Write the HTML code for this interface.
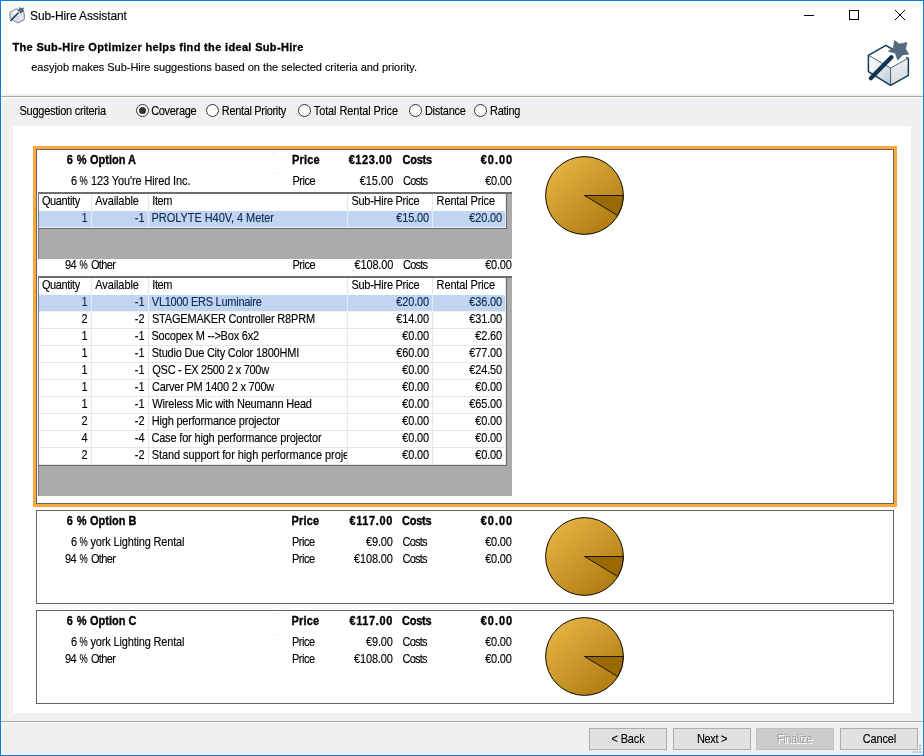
<!DOCTYPE html>
<html>
<head>
<meta charset="utf-8">
<title>Sub-Hire Assistant</title>
<style>
*{box-sizing:border-box;margin:0;padding:0}
html,body{width:924px;height:756px;overflow:hidden;background:#f0f0f0}
body{font-family:"Liberation Sans",sans-serif;font-size:11px;color:#000;position:relative;-webkit-text-stroke:0.12px currentColor}
#wrap{position:absolute;left:0;top:0;width:924px;height:756px;will-change:transform}
.abs{position:absolute}
.t{position:absolute;white-space:nowrap;line-height:13px;height:13px}
.b{font-weight:bold;-webkit-text-stroke:0.3px #000}
#win{position:absolute;left:0;top:0;width:924px;height:756px;background:#f0f0f0}
#bd{position:absolute;left:0;top:0;width:924px;height:756px;border:1px solid #0a7bd8;z-index:50;pointer-events:none}
#hdr{position:absolute;left:1px;top:1px;width:922px;height:93px;background:#fff}
#sep1{position:absolute;left:1px;top:96px;width:922px;height:1px;background:#aca899}
#sep1b{position:absolute;left:1px;top:97px;width:922px;height:1px;background:#fff}
#edgeL,#edgeR{position:absolute;top:94px;width:1px;height:661px;background:#fbf8f5}
#edgeL{left:1px}#edgeR{left:922px}
#panel{position:absolute;left:13px;top:126px;width:898px;height:587px;background:#fff}
#sep2{position:absolute;left:1px;top:721px;width:922px;height:1px;background:#aca899}
#sep2b{position:absolute;left:1px;top:722px;width:922px;height:1px;background:#fff}
.radio{position:absolute;width:13px;height:13px;border:1px solid #333;border-radius:50%;background:#fff;top:104px}
.radio.on::after{content:"";position:absolute;left:2px;top:2px;width:7px;height:7px;border-radius:50%;background:#333}
.btn{position:absolute;top:728px;width:78px;height:22px;border:1px solid #adadad;background:#e1e1e1}
.btn.dis{background:#cccccc;border-color:#bfbfbf}
.bt_{position:absolute;white-space:nowrap;line-height:13px;height:13px;top:733px}
.bt_.dis{color:#a0a0a0;text-shadow:1px 1px 0 #fff;-webkit-text-stroke:0}
.optA{position:absolute;left:33px;top:146px;width:864px;height:361px;border:3px solid #ffa73a;background:#fff}
.optA .in{position:absolute;left:0;top:0;width:858px;height:355px;border:1px solid #646464}
.opt{position:absolute;left:36px;width:858px;height:94px;border:1px solid #646464;background:#fff}
.grid{position:absolute;left:38px;width:474px;background:#ababab}
.grid .bl{position:absolute;left:0;top:0;width:1px;height:100%;background:#7a7a7a}
.grid .bt{position:absolute;left:0;top:0;width:474px;height:2px;background:#6e6e6e}
.cells{position:absolute;left:1px;top:2px;width:468px;background:#fff;border-right:1px solid #696969;border-bottom:1px solid #696969}
.row{position:relative;height:17px;width:467px;border-bottom:1px solid #e6e6e6;background:#fff}
.row.h{border-bottom-color:#fff}
.row.sel{background:#c1d5f1;color:#0b2a55;border-bottom-color:#eef3fb}
.c{position:absolute;top:0;height:16px;line-height:15px;white-space:nowrap;overflow:hidden;border-right:1px solid #e6e6e6}
.row.sel .c{border-right-color:#e4ecf8}
.c1{left:0;width:53px}
.c2{left:53px;width:57px}
.c3{left:110px;width:199px}
.c4{left:309px;width:85px}
.c5{left:394px;width:73px}
.row .c1,.row .c2,.row .c4,.row .c5{text-align:right;padding-right:3px}
.row .c5{padding-right:3px}
.row .c1,.row .c2{padding-right:3.5px}
.row .c4 span,.row .c5 span{letter-spacing:-0.15px}
.row.h .c{text-align:left;padding-left:3px;padding-right:0}
.row .c3{padding-left:3px}
.c span{display:inline-block;transform:scaleY(1.12);transform-origin:0 11px}
.ws{word-spacing:-1.2px}
.pc{display:inline-block;transform:scaleX(0.84);transform-origin:100% 50%}
.ms{transform:scaleY(1.12);transform-origin:0 10px}
</style>
</head>
<body>
<div id="wrap">
<div id="win"><div id="edgeL"></div><div id="edgeR"></div><div id="hdr"></div><div id="sep1"></div><div id="sep1b"></div><div id="panel"></div><div id="sep2"></div><div id="sep2b"></div></div>
<div id="bd"></div>
<svg class="abs" style="left:8px;top:5px" width="20" height="20" viewBox="8 5 20 20">
<g transform="translate(9.7 6.8) scale(0.358) translate(-867.6 -39.9)">
<path d="M868.4 55.6 L890.6 68.1 L890.6 85.3 L868.4 71.7 Z" fill="#dfe4e9"/>
<path d="M890.6 68.1 L908.4 58.4 L908.4 75.3 L890.6 85.3 Z" fill="#e6eaee"/>
<path d="M893 49.5 L885.9 45.3 L868.4 55.3 L868.4 71.7 L890.6 85.3 L908.4 75.3 L908.4 58.6 L906.8 57.6" fill="none" stroke="#5d7589" stroke-width="2.6" stroke-linejoin="round" stroke-linecap="round"/>
<path d="M868.4 55.3 L890.6 68.1 L908.4 58.1 M890.6 68.1 L890.6 85.3" fill="none" stroke="#a9b6c1" stroke-width="1.6"/>
<path d="M894.5 40.3 L899.1 43.9 L907 42.4 L905.6 48.9 L908.8 54.2 L902.7 54.9 L897.7 60.3 L895.2 53.1 L888.4 51.4 L893.4 47.4 Z" fill="#516a80" stroke="#516a80" stroke-width="0.6" stroke-linejoin="round"/>
<path d="M870.8 78.3 L891.4 57.3" stroke="#0f3450" stroke-width="4.4" stroke-linecap="round"/>
</g>
</svg>

<div class="t " id="title" style="left:30.00px;top:8px;letter-spacing:-0.106px;font-size:12px;line-height:16px;height:16px;transform:scaleY(1.06);transform-origin:0 12px;">Sub-Hire Assistant</div>
<svg class="abs" style="left:795px;top:5px" width="120" height="20" viewBox="0 0 120 20" shape-rendering="crispEdges">
<rect x="9" y="10" width="10" height="1" fill="#000"/>
<rect x="54.5" y="5.5" width="9" height="9" fill="none" stroke="#000" stroke-width="1"/>
<path d="M100 5 L110 15 M110 5 L100 15" stroke="#000" stroke-width="1" shape-rendering="auto"/>
</svg>
<svg class="abs" style="left:862px;top:36px" width="52" height="54" viewBox="862 36 52 54">
<defs>
<linearGradient id="bl" x1="0" y1="0" x2="1" y2="1"><stop offset="0" stop-color="#ffffff"/><stop offset="0.35" stop-color="#eef0f3"/><stop offset="1" stop-color="#bcc6d0"/></linearGradient>
<linearGradient id="br" x1="0" y1="0" x2="0.3" y2="1"><stop offset="0" stop-color="#f4f5f7"/><stop offset="1" stop-color="#d5dbe1"/></linearGradient>
</defs>
<path d="M868.4 55.6 L890.6 68.1 L890.6 85.3 L868.4 71.7 Z" fill="url(#bl)"/>
<path d="M890.6 68.1 L908.4 58.4 L908.4 75.3 L890.6 85.3 Z" fill="url(#br)"/>
<path d="M893 49.5 L885.9 45.3 L868.4 55.3 L868.4 71.7 L890.6 85.3 L908.4 75.3 L908.4 58.6 L906.8 57.6" fill="none" stroke="#123a56" stroke-width="1.5" stroke-linejoin="round" stroke-linecap="round"/>
<path d="M868.4 55.3 L890.6 68.1 L908.4 58.1 M890.6 68.1 L890.6 85.3" fill="none" stroke="#1d4560" stroke-width="0.8"/>
<path d="M894.5 40.3 L899.1 43.9 L907 42.4 L905.6 48.9 L908.8 54.2 L902.7 54.9 L897.7 60.3 L895.2 53.1 L888.4 51.4 L893.4 47.4 Z" fill="#516a80" stroke="#516a80" stroke-width="0.6" stroke-linejoin="round"/>
<path d="M870.8 78.3 L891.4 57.3" stroke="#0f3450" stroke-width="4.2" stroke-linecap="round"/>
</svg>

<div class="t b" id="h1" style="left:12.45px;top:41px;letter-spacing:0.335px;">The Sub-Hire Optimizer helps find the ideal Sub-Hire</div>
<div class="t " id="h2" style="left:31.27px;top:61px;letter-spacing:-0.030px;">easyjob makes Sub-Hire suggestions based on the selected criteria and priority.</div>
<div class="t  ms" id="crit" style="left:19.45px;top:105px;letter-spacing:-0.250px;">Suggestion criteria</div>
<div class="radio on" style="left:136px"></div>
<div class="t  ms" id="r1" style="left:151.18px;top:105px;letter-spacing:-0.321px;">Coverage</div>
<div class="radio" style="left:206px"></div>
<div class="t  ms" id="r2" style="left:221.81px;top:105px;letter-spacing:-0.334px;">Rental Priority</div>
<div class="radio" style="left:298px"></div>
<div class="t  ms" id="r3" style="left:313.77px;top:105px;letter-spacing:-0.111px;">Total Rental Price</div>
<div class="radio" style="left:409px"></div>
<div class="t  ms" id="r4" style="left:424.90px;top:105px;letter-spacing:-0.257px;">Distance</div>
<div class="radio" style="left:474px"></div>
<div class="t  ms" id="r5" style="left:490.08px;top:105px;letter-spacing:-0.288px;">Rating</div>
<div class="optA"><div class="in"></div></div>
<div class="opt" style="top:510px"></div>
<div class="opt" style="top:610px"></div>
<div class="abs" style="left:273px;top:152px;width:2px;height:1px;background:#e4e9ee"></div><div class="abs" style="left:274px;top:173px;width:2px;height:1px;background:#e4e9ee"></div><div class="abs" style="left:273px;top:513px;width:2px;height:1px;background:#e4e9ee"></div><div class="abs" style="left:274px;top:534px;width:2px;height:1px;background:#e4e9ee"></div><div class="abs" style="left:273px;top:613px;width:2px;height:1px;background:#e4e9ee"></div><div class="abs" style="left:274px;top:634px;width:2px;height:1px;background:#e4e9ee"></div>
<div class="t b ms" id="a1p" style="right:836.99px;top:154px;letter-spacing:0.450px;">6 %</div>
<div class="t b ms" id="a1n" style="left:90.00px;top:154px;">Option A</div>
<div class="t b ms" id="a1pl" style="left:292.00px;top:154px;letter-spacing:0.180px;">Price</div>
<div class="t b ms" id="a1pv" style="right:531.62px;top:154px;letter-spacing:0.570px;">€123.00</div>
<div class="t b ms" id="a1cl" style="left:402.45px;top:154px;letter-spacing:-0.225px;">Costs</div>
<div class="t b ms" id="a1cv" style="right:410.77px;top:154px;letter-spacing:0.990px;">€0.00</div>
<div class="t  ws ms" id="a2p" style="right:836.80px;top:175px;letter-spacing:-0.500px;">6 <span class="pc">%</span></div>
<div class="t  ms" id="a2n" style="left:90.90px;top:175px;letter-spacing:-0.108px;">123 You're Hired Inc.</div>
<div class="t  ms" id="a2pl" style="left:292.45px;top:175px;letter-spacing:-0.495px;">Price</div>
<div class="t  ms" id="a2pv" style="right:530.72px;top:175px;">€15.00</div>
<div class="t  ms" id="a2cl" style="left:403.08px;top:175px;letter-spacing:-0.810px;">Costs</div>
<div class="t  ms" id="a2cv" style="right:412.35px;top:175px;letter-spacing:-0.203px;">€0.00</div>
<div class="grid" style="top:192px;height:67px"><div class="bt"></div><div class="bl"></div><div class="cells"><div class="row h"><div class="c c1"><span id="g1h1" style="letter-spacing:-0.386px;position:relative;left:-0.09px;">Quantity</span></div><div class="c c2"><span id="g1h2" style="letter-spacing:-0.090px;position:relative;left:0.18px;">Available</span></div><div class="c c3"><span id="g1h3" style="letter-spacing:-0.450px;position:relative;left:0.36px;">Item</span></div><div class="c c4"><span id="g1h4" style="letter-spacing:-0.263px;position:relative;left:0.45px;">Sub-Hire Price</span></div><div class="c c5"><span id="g1h5" style="letter-spacing:-0.131px;position:relative;left:0.58px;">Rental Price</span></div></div><div class="row sel"><div class="c c1"><span id="g1r0c1" style="">1</span></div><div class="c c2"><span id="g1r0c2" style="">-1</span></div><div class="c c3"><span id="g1r0c3" style="letter-spacing:-0.054px;position:relative;left:-0.45px;">PROLYTE H40V, 4 Meter</span></div><div class="c c4"><span id="g1r0c4" style="">€15.00</span></div><div class="c c5"><span id="g1r0c5" style="">€20.00</span></div></div></div></div>
<div class="t  ws ms" id="a3p" style="right:836.80px;top:259px;letter-spacing:-0.400px;">94 <span class="pc">%</span></div>
<div class="t  ms" id="a3n" style="left:90.90px;top:259px;letter-spacing:-0.630px;">Other</div>
<div class="t  ms" id="a3pl" style="left:292.45px;top:259px;letter-spacing:-0.495px;">Price</div>
<div class="t  ms" id="a3pv" style="right:530.90px;top:259px;letter-spacing:-0.180px;">€108.00</div>
<div class="t  ms" id="a3cl" style="left:403.08px;top:259px;letter-spacing:-0.810px;">Costs</div>
<div class="t  ms" id="a3cv" style="right:412.35px;top:259px;letter-spacing:-0.203px;">€0.00</div>
<div class="grid" style="top:276px;height:220px"><div class="bt"></div><div class="bl"></div><div class="cells"><div class="row h"><div class="c c1"><span id="g2h1" style="letter-spacing:-0.386px;position:relative;left:-0.09px;">Quantity</span></div><div class="c c2"><span id="g2h2" style="letter-spacing:-0.090px;position:relative;left:0.18px;">Available</span></div><div class="c c3"><span id="g2h3" style="letter-spacing:-0.450px;position:relative;left:0.36px;">Item</span></div><div class="c c4"><span id="g2h4" style="letter-spacing:-0.263px;position:relative;left:0.45px;">Sub-Hire Price</span></div><div class="c c5"><span id="g2h5" style="letter-spacing:-0.131px;position:relative;left:0.58px;">Rental Price</span></div></div><div class="row sel"><div class="c c1"><span id="g2r0c1" style="">1</span></div><div class="c c2"><span id="g2r0c2" style="">-1</span></div><div class="c c3"><span id="g2r0c3" style="letter-spacing:-0.261px;position:relative;left:-0.18px;">VL1000 ERS Luminaire</span></div><div class="c c4"><span id="g2r0c4" style="">€20.00</span></div><div class="c c5"><span id="g2r0c5" style="">€36.00</span></div></div><div class="row"><div class="c c1"><span id="g2r1c1" style="">2</span></div><div class="c c2"><span id="g2r1c2" style="">-2</span></div><div class="c c3"><span id="g2r1c3" style="letter-spacing:-0.183px;position:relative;left:-0.09px;">STAGEMAKER Controller R8PRM</span></div><div class="c c4"><span id="g2r1c4" style="">€14.00</span></div><div class="c c5"><span id="g2r1c5" style="">€31.00</span></div></div><div class="row"><div class="c c1"><span id="g2r2c1" style="">1</span></div><div class="c c2"><span id="g2r2c2" style="">-1</span></div><div class="c c3"><span id="g2r2c3" style="letter-spacing:-0.208px;position:relative;left:-0.54px;">Socopex M --&gt;Box 6x2</span></div><div class="c c4"><span id="g2r2c4" style="">€0.00</span></div><div class="c c5"><span id="g2r2c5" style="">€2.60</span></div></div><div class="row"><div class="c c1"><span id="g2r3c1" style="">1</span></div><div class="c c2"><span id="g2r3c2" style="">-1</span></div><div class="c c3"><span id="g2r3c3" style="letter-spacing:-0.212px;position:relative;left:-0.27px;">Studio Due City Color 1800HMI</span></div><div class="c c4"><span id="g2r3c4" style="">€60.00</span></div><div class="c c5"><span id="g2r3c5" style="">€77.00</span></div></div><div class="row"><div class="c c1"><span id="g2r4c1" style="">1</span></div><div class="c c2"><span id="g2r4c2" style="">-1</span></div><div class="c c3"><span id="g2r4c3" style="letter-spacing:-0.291px;position:relative;left:0.36px;">QSC - EX 2500 2 x 700w</span></div><div class="c c4"><span id="g2r4c4" style="">€0.00</span></div><div class="c c5"><span id="g2r4c5" style="">€24.50</span></div></div><div class="row"><div class="c c1"><span id="g2r5c1" style="">1</span></div><div class="c c2"><span id="g2r5c2" style="">-1</span></div><div class="c c3"><span id="g2r5c3" style="letter-spacing:-0.221px;position:relative;left:-0.09px;">Carver PM 1400 2 x 700w</span></div><div class="c c4"><span id="g2r5c4" style="">€0.00</span></div><div class="c c5"><span id="g2r5c5" style="">€0.00</span></div></div><div class="row"><div class="c c1"><span id="g2r6c1" style="">1</span></div><div class="c c2"><span id="g2r6c2" style="">-1</span></div><div class="c c3"><span id="g2r6c3" style="letter-spacing:-0.186px;position:relative;left:0.27px;">Wireless Mic with Neumann Head</span></div><div class="c c4"><span id="g2r6c4" style="">€0.00</span></div><div class="c c5"><span id="g2r6c5" style="">€65.00</span></div></div><div class="row"><div class="c c1"><span id="g2r7c1" style="">2</span></div><div class="c c2"><span id="g2r7c2" style="">-2</span></div><div class="c c3"><span id="g2r7c3" style="letter-spacing:-0.202px;position:relative;left:-0.27px;">High performance projector</span></div><div class="c c4"><span id="g2r7c4" style="">€0.00</span></div><div class="c c5"><span id="g2r7c5" style="">€0.00</span></div></div><div class="row"><div class="c c1"><span id="g2r8c1" style="">4</span></div><div class="c c2"><span id="g2r8c2" style="">-4</span></div><div class="c c3"><span id="g2r8c3" style="letter-spacing:-0.172px;position:relative;left:-0.63px;">Case for high performance projector</span></div><div class="c c4"><span id="g2r8c4" style="">€0.00</span></div><div class="c c5"><span id="g2r8c5" style="">€0.00</span></div></div><div class="row"><div class="c c1"><span id="g2r9c1" style="">2</span></div><div class="c c2"><span id="g2r9c2" style="">-2</span></div><div class="c c3"><span id="g2r9c3" style="letter-spacing:-0.080px;position:relative;left:-0.30px;">Stand support for high performance projector</span></div><div class="c c4"><span id="g2r9c4" style="">€0.00</span></div><div class="c c5"><span id="g2r9c5" style="">€0.00</span></div></div></div></div>
<svg class="abs pie" style="left:544px;top:155px" width="82" height="82" viewBox="0 0 82 82">
<defs><linearGradient id="g1" x1="0.15" y1="0.1" x2="0.85" y2="0.9"><stop offset="0" stop-color="#e4b243"/><stop offset="1" stop-color="#b07c10"/></linearGradient></defs>
<circle cx="40.5" cy="40.5" r="38.9" fill="url(#g1)" stroke="#0c0900" stroke-width="1"/>
<path d="M40.5 40.5 L79.4 40.5 A38.9 38.9 0 0 1 73.8 60.6 Z" fill="#9a6a02" stroke="#0c0900" stroke-width="0.9" stroke-linejoin="round"/>
</svg>
<div class="t b ms" id="b1p" style="right:836.99px;top:515px;letter-spacing:0.450px;">6 %</div>
<div class="t b ms" id="b1n" style="left:90.00px;top:515px;">Option B</div>
<div class="t b ms" id="b1pl" style="left:291.50px;top:515px;letter-spacing:0.180px;">Price</div>
<div class="t b ms" id="b1pv" style="right:530.99px;top:515px;letter-spacing:0.630px;">€117.00</div>
<div class="t b ms" id="b1cl" style="left:401.95px;top:515px;letter-spacing:-0.225px;">Costs</div>
<div class="t b ms" id="b1cv" style="right:410.77px;top:515px;letter-spacing:0.990px;">€0.00</div>
<div class="t  ws ms" id="b2p" style="right:836.80px;top:536px;letter-spacing:-0.500px;">6 <span class="pc">%</span></div>
<div class="t  ms" id="b2n" style="left:90.54px;top:536px;letter-spacing:-0.171px;">york Lighting Rental</div>
<div class="t  ms" id="b2pl" style="left:291.95px;top:536px;letter-spacing:-0.495px;">Price</div>
<div class="t  ms" id="b2pv" style="right:531.31px;top:536px;letter-spacing:-0.180px;">€9.00</div>
<div class="t  ms" id="b2cl" style="left:402.58px;top:536px;letter-spacing:-0.810px;">Costs</div>
<div class="t  ms" id="b2cv" style="right:412.35px;top:536px;letter-spacing:-0.203px;">€0.00</div>
<div class="t  ws ms" id="b3p" style="right:836.80px;top:553px;letter-spacing:-0.400px;">94 <span class="pc">%</span></div>
<div class="t  ms" id="b3n" style="left:90.90px;top:553px;letter-spacing:-0.630px;">Other</div>
<div class="t  ms" id="b3pl" style="left:291.95px;top:553px;letter-spacing:-0.495px;">Price</div>
<div class="t  ms" id="b3pv" style="right:531.40px;top:553px;letter-spacing:-0.180px;">€108.00</div>
<div class="t  ms" id="b3cl" style="left:402.58px;top:553px;letter-spacing:-0.810px;">Costs</div>
<div class="t  ms" id="b3cv" style="right:412.35px;top:553px;letter-spacing:-0.203px;">€0.00</div>
<svg class="abs pie" style="left:544px;top:516px" width="82" height="82" viewBox="0 0 82 82">
<defs><linearGradient id="g2" x1="0.15" y1="0.1" x2="0.85" y2="0.9"><stop offset="0" stop-color="#e4b243"/><stop offset="1" stop-color="#b07c10"/></linearGradient></defs>
<circle cx="40.5" cy="40.5" r="38.9" fill="url(#g2)" stroke="#0c0900" stroke-width="1"/>
<path d="M40.5 40.5 L79.4 40.5 A38.9 38.9 0 0 1 73.8 60.6 Z" fill="#9a6a02" stroke="#0c0900" stroke-width="0.9" stroke-linejoin="round"/>
</svg>
<div class="t b ms" id="c1p" style="right:836.99px;top:615px;letter-spacing:0.450px;">6 %</div>
<div class="t b ms" id="c1n" style="left:90.00px;top:615px;">Option C</div>
<div class="t b ms" id="c1pl" style="left:291.50px;top:615px;letter-spacing:0.180px;">Price</div>
<div class="t b ms" id="c1pv" style="right:530.99px;top:615px;letter-spacing:0.630px;">€117.00</div>
<div class="t b ms" id="c1cl" style="left:401.95px;top:615px;letter-spacing:-0.225px;">Costs</div>
<div class="t b ms" id="c1cv" style="right:410.77px;top:615px;letter-spacing:0.990px;">€0.00</div>
<div class="t  ws ms" id="c2p" style="right:836.80px;top:636px;letter-spacing:-0.500px;">6 <span class="pc">%</span></div>
<div class="t  ms" id="c2n" style="left:90.54px;top:636px;letter-spacing:-0.171px;">york Lighting Rental</div>
<div class="t  ms" id="c2pl" style="left:291.95px;top:636px;letter-spacing:-0.495px;">Price</div>
<div class="t  ms" id="c2pv" style="right:531.31px;top:636px;letter-spacing:-0.180px;">€9.00</div>
<div class="t  ms" id="c2cl" style="left:402.58px;top:636px;letter-spacing:-0.810px;">Costs</div>
<div class="t  ms" id="c2cv" style="right:412.35px;top:636px;letter-spacing:-0.203px;">€0.00</div>
<div class="t  ws ms" id="c3p" style="right:836.80px;top:653px;letter-spacing:-0.400px;">94 <span class="pc">%</span></div>
<div class="t  ms" id="c3n" style="left:90.90px;top:653px;letter-spacing:-0.630px;">Other</div>
<div class="t  ms" id="c3pl" style="left:291.95px;top:653px;letter-spacing:-0.495px;">Price</div>
<div class="t  ms" id="c3pv" style="right:531.40px;top:653px;letter-spacing:-0.180px;">€108.00</div>
<div class="t  ms" id="c3cl" style="left:402.58px;top:653px;letter-spacing:-0.810px;">Costs</div>
<div class="t  ms" id="c3cv" style="right:412.35px;top:653px;letter-spacing:-0.203px;">€0.00</div>
<svg class="abs pie" style="left:544px;top:616px" width="82" height="82" viewBox="0 0 82 82">
<defs><linearGradient id="g3" x1="0.15" y1="0.1" x2="0.85" y2="0.9"><stop offset="0" stop-color="#e4b243"/><stop offset="1" stop-color="#b07c10"/></linearGradient></defs>
<circle cx="40.5" cy="40.5" r="38.9" fill="url(#g3)" stroke="#0c0900" stroke-width="1"/>
<path d="M40.5 40.5 L79.4 40.5 A38.9 38.9 0 0 1 73.8 60.6 Z" fill="#9a6a02" stroke="#0c0900" stroke-width="0.9" stroke-linejoin="round"/>
</svg>
<div class="btn" style="left:589px"></div>
<div class="bt_ ms" id="btn1" style="left:589.00px;width:78px;text-align:center;letter-spacing:-0.162px;">&lt; Back</div>
<div class="btn" style="left:673px"></div>
<div class="bt_ ms" id="btn2" style="left:673.00px;width:78px;text-align:center;letter-spacing:-0.360px;">Next &gt;</div>
<div class="btn dis" style="left:756px"></div>
<div class="bt_ ms dis" id="btn3" style="left:755.41px;width:78px;text-align:center;letter-spacing:-0.321px;">Finalize</div>
<div class="btn" style="left:840px"></div>
<div class="bt_ ms" id="btn4" style="left:840.45px;width:78px;text-align:center;letter-spacing:-0.144px;">Cancel</div>
<svg class="abs" style="left:912px;top:744px" width="10" height="10" viewBox="912 744 10 10" shape-rendering="crispEdges"><g fill="#bcbcbc"><rect x="919" y="745" width="2" height="2"/><rect x="919" y="748" width="2" height="2"/><rect x="919" y="751" width="2" height="2"/><rect x="916" y="751" width="2" height="2"/><rect x="913" y="751" width="2" height="2"/></g></svg>

</div>
</body>
</html>
